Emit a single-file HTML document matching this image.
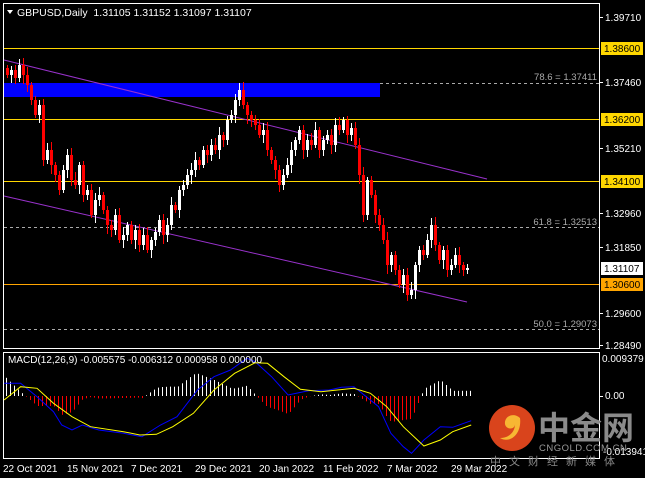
<!DOCTYPE html>
<html><head><meta charset="utf-8"><style>
html,body{margin:0;padding:0;background:#000;}
svg{display:block;}
text{font-family:"Liberation Sans","Noto Sans CJK SC",sans-serif;}
</style></head><body>
<div id="wrap"></div>
<script>
var c=[75,70,78,65,75,85,100,115,105,160,150,165,175,190,170,155,180,185,165,195,190,215,200,195,210,225,230,215,240,235,225,240,230,245,235,250,240,232,220,235,225,205,210,190,185,175,170,160,165,150,155,145,150,135,140,120,115,100,90,105,115,120,125,135,130,150,160,170,185,175,165,150,140,130,150,140,145,130,150,140,135,145,125,130,120,135,128,145,175,215,180,195,215,225,240,265,255,270,285,275,295,290,265,250,255,240,225,245,260,250,270,265,255,265,270,268];
var cs="";var prev=68;
for(var i=0;i<c.length;i++){var x=6+i*4;var o=prev,cl=c[i];var tp=Math.min(o,cl),bt=Math.max(o,cl);
var hi=tp-3-((i*7)%6),lo=bt+3+((i*5)%7);var col=cl<o?"#fff":"#f00";
cs+='<rect x="'+(x+1)+'" y="'+hi+'" width="1" height="'+(lo-hi)+'" fill="'+col+'"/>';
cs+='<rect x="'+x+'" y="'+tp+'" width="3" height="'+Math.max(1,bt-tp)+'" fill="'+col+'"/>';prev=cl;}
var B=[[10,130],[50,130],[90,170],[130,215],[150,255],[175,270],[200,255],[240,270],[300,280],[345,290],[390,255],[430,230],[480,150],[520,110],[560,90],[600,55],[620,65],[660,110],[700,165],[720,160],[750,152],[800,150],[830,142],[860,140],[880,160],[920,200],[950,280],[980,320],[1000,340],[1030,300],[1070,260],[1100,262],[1145,242]];
var Y=[[10,180],[50,140],[90,145],[130,190],[175,230],[220,260],[300,275],[340,285],[380,283],[420,260],[470,220],[520,150],[570,100],[620,68],[650,70],[690,110],[730,148],[780,155],[860,145],[900,160],[940,200],[980,260],[1030,318],[1070,300],[1100,275],[1145,255]];
function tr(a){return a.map(function(p){return [p[0]/2.43,340+p[1]/3];});}
B=tr(B);Y=tr(Y);
function interp(a,x){if(x<=a[0][0])return a[0][1];for(var i=1;i<a.length;i++){if(x<=a[i][0]){var t=(x-a[i-1][0])/(a[i][0]-a[i-1][0]);return a[i-1][1]+t*(a[i][1]-a[i-1][1]);}}return a[a.length-1][1];}
var ms="";
for(var xx=6;xx<=472;xx+=4){var h=(interp(Y,xx)-interp(B,xx))*1.2;var col2=h>0?"#fff":"#f00";
var y0=h>0?396-h:396;ms+='<rect x="'+xx+'" y="'+y0.toFixed(1)+'" width="1" height="'+Math.abs(h).toFixed(1)+'" fill="'+col2+'"/>';}
function pl(a,col){return '<polyline points="'+a.map(function(p){return p[0].toFixed(1)+","+p[1].toFixed(1);}).join(" ")+'" fill="none" stroke="'+col+'" stroke-width="1"/>';}
ms+=pl(B,"#0000ff")+pl(Y,"#ffff00");
var svg='<svg width="645" height="478" viewBox="0 0 645 478" xmlns="http://www.w3.org/2000/svg">'+
'<rect width="645" height="478" fill="#000"/>'+
'<rect x="3.5" y="3.5" width="596" height="345" fill="none" stroke="#fff"/>'+
'<rect x="3.5" y="352.5" width="596" height="106" fill="none" stroke="#fff"/>'+
'<rect x="4" y="83" width="376" height="14" fill="#0000ff"/>'+
'<line x1="4" y1="48.5" x2="599" y2="48.5" stroke="#ffd700"/>'+
'<line x1="4" y1="119.5" x2="599" y2="119.5" stroke="#ffd700"/>'+
'<line x1="4" y1="181.5" x2="599" y2="181.5" stroke="#ffd700"/>'+
'<line x1="4" y1="284.5" x2="599" y2="284.5" stroke="#ffa500"/>'+
'<line x1="380" y1="83.5" x2="599" y2="83.5" stroke="#aaa" stroke-dasharray="3,3"/>'+
'<line x1="4" y1="227.5" x2="599" y2="227.5" stroke="#aaa" stroke-dasharray="3,3"/>'+
'<line x1="4" y1="329.5" x2="599" y2="329.5" stroke="#aaa" stroke-dasharray="3,3"/>'+
'<text x="597" y="80" font-size="9.5" fill="#aaa" text-anchor="end">78.6 = 1.37411</text>'+
'<text x="597" y="225" font-size="9.5" fill="#aaa" text-anchor="end">61.8 = 1.32513</text>'+
'<text x="597" y="327" font-size="9.5" fill="#aaa" text-anchor="end">50.0 = 1.29073</text>'+
'<line x1="4" y1="60" x2="487" y2="179" stroke="#9932cc"/>'+
'<line x1="4" y1="196" x2="467" y2="302" stroke="#9932cc"/>'+
cs+ms+
'<polygon points="7,10 13,10 10,14" fill="#fff"/>'+
'<text x="17" y="16" font-size="10.5" fill="#fff" xml:space="preserve">GBPUSD,Daily  1.31105 1.31152 1.31097 1.31107</text>'+
'<text x="8" y="363" font-size="10" fill="#fff">MACD(12,26,9) -0.005575 -0.006312 0.000958 0.000000</text>'+
'<g font-size="10" fill="#fff">'+
'<line x1="599" y1="17.5" x2="603" y2="17.5" stroke="#fff"/><text x="605" y="21">1.39710</text>'+
'<line x1="599" y1="82.5" x2="603" y2="82.5" stroke="#fff"/><text x="605" y="86">1.37460</text>'+
'<line x1="599" y1="148.5" x2="603" y2="148.5" stroke="#fff"/><text x="605" y="152">1.35210</text>'+
'<line x1="599" y1="213.5" x2="603" y2="213.5" stroke="#fff"/><text x="605" y="217">1.32960</text>'+
'<line x1="599" y1="247.5" x2="603" y2="247.5" stroke="#fff"/><text x="605" y="251">1.31850</text>'+
'<line x1="599" y1="313.5" x2="603" y2="313.5" stroke="#fff"/><text x="605" y="317">1.29600</text>'+
'<line x1="599" y1="345.5" x2="603" y2="345.5" stroke="#fff"/><text x="605" y="349">1.28490</text>'+
'<rect x="601" y="42" width="42" height="13" fill="#ffd700"/><text x="604" y="52" fill="#000">1.38600</text>'+
'<rect x="601" y="113" width="42" height="13" fill="#ffd700"/><text x="604" y="123" fill="#000">1.36200</text>'+
'<rect x="601" y="175" width="42" height="13" fill="#ffd700"/><text x="604" y="185" fill="#000">1.34100</text>'+
'<rect x="601" y="262" width="42" height="13" fill="#fff"/><text x="604" y="272" fill="#000">1.31107</text>'+
'<rect x="601" y="278" width="42" height="13" fill="#ffa500"/><text x="604" y="288" fill="#000">1.30600</text>'+
'<text x="602" y="362">0.009379</text>'+
'<line x1="599" y1="396.5" x2="603" y2="396.5" stroke="#fff"/><text x="605" y="399">0.00</text>'+
'<text x="603" y="455">-0.013941</text></g>'+
'<circle cx="512" cy="428" r="23" fill="#d9441c"/>'+
'<path d="M520,418 c-6,-6 -16,-2 -15,6 c1,6 10,6 10,0 c0,8 -6,14 -15,14 c10,6 22,-4 20,-20z" fill="#f7b733"/>'+
'<text x="538" y="439" font-size="32" font-weight="bold" fill="#8a8a8a">中金网</text>'+
'<text x="539" y="451" font-size="9.5" fill="#999" letter-spacing="0.5">CNGOLD.COM.CN</text>'+
'<text x="490" y="465" font-size="11" fill="#888" letter-spacing="8">中文财经新媒体</text>'+
'<g font-size="10" fill="#fff">'+
'<text x="3" y="472">22 Oct 2021</text><text x="67" y="472">15 Nov 2021</text><text x="131" y="472">7 Dec 2021</text>'+
'<text x="195" y="472">29 Dec 2021</text><text x="259" y="472">20 Jan 2022</text><text x="323" y="472">11 Feb 2022</text>'+
'<text x="387" y="472">7 Mar 2022</text><text x="451" y="472">29 Mar 2022</text></g>'+
'</svg>';
document.getElementById("wrap").innerHTML=svg;
</script>
</body></html>
